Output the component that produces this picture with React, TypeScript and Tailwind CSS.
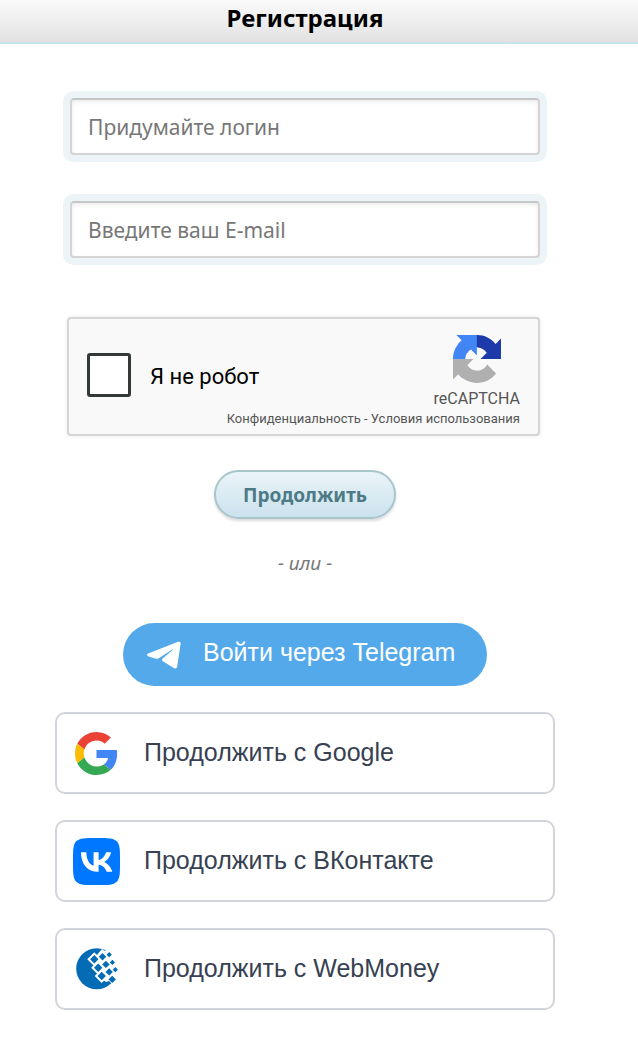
import type { ReactNode } from 'react';

function RecaptchaLogo() {
  return (
    <svg viewBox="0 0 64 64" className="size-12" aria-hidden="true">
      <path fill="#1c3aa9" d="M64 31.955l-.033-1.37V4.687l-7.16 7.16C50.948 4.674 42.033.093 32.05.093c-10.4 0-19.622 4.96-25.458 12.64l11.736 11.86a15.55 15.55 0 0 1 4.754-5.334c2.05-1.6 4.952-2.906 8.968-2.906.485 0 .86.057 1.135.163 4.976.393 9.288 3.14 11.828 7.124l-8.307 8.307L64 31.953" />
      <path fill="#4285f4" d="M31.862.094l-1.37.033H4.594l7.16 7.16C4.58 13.147 0 22.06 0 32.046c0 10.4 4.96 19.622 12.64 25.458L24.5 45.768a15.55 15.55 0 0 1-5.334-4.754c-1.6-2.05-2.906-4.952-2.906-8.968 0-.485.057-.86.163-1.135.393-4.976 3.14-9.288 7.124-11.828l8.307 8.307L31.86.095" />
      <path fill="#b0b0b0" d="M.001 32.045l.033 1.37v25.898l7.16-7.16c5.86 7.173 14.774 11.754 24.76 11.754 10.4 0 19.622-4.96 25.458-12.64l-11.736-11.86a15.55 15.55 0 0 1-4.754 5.334c-2.05 1.6-4.952 2.906-8.968 2.906-.485 0-.86-.057-1.135-.163-4.976-.393-9.288-3.14-11.828-7.124l8.307-8.307c-10.522.04-22.4.066-27.295-.005" />
    </svg>
  );
}

function TelegramIcon() {
  return (
    <svg viewBox="0 0 34 28" className="h-7 w-[34px]" fill="#fff" aria-hidden="true">
      <path d="M1.2 12.4 L31 .8 C32.8 .2 33.9 1.2 33.6 3 L30.2 25.6 C29.9 27.6 28.3 28 26.8 27 L16.2 20.4 C14.8 19.5 14.6 18.7 15.7 17.6 L25.6 9 C26.3 8.3 26 8 25.2 8.4 L12.6 16.8 C11.2 17.7 9.8 17.9 8.2 17.4 L1.6 15.4 C-.3 14.8 -.4 13.1 1.2 12.4 Z" />
    </svg>
  );
}

function GoogleIcon() {
  return (
    <svg viewBox="0 0 48 48" className="size-[43px]" aria-hidden="true">
      <path fill="#EA4335" d="M24 9.5c3.54 0 6.71 1.22 9.21 3.6l6.85-6.85C35.9 2.38 30.47 0 24 0 14.62 0 6.51 5.38 2.56 13.22l7.98 6.19C12.43 13.72 17.74 9.5 24 9.5z" />
      <path fill="#4285F4" d="M46.98 24.55c0-1.57-.15-3.09-.38-4.55H24v9.02h12.94c-.58 2.96-2.26 5.48-4.78 7.18l7.73 6c4.51-4.18 7.09-10.36 7.09-17.65z" />
      <path fill="#FBBC05" d="M10.53 28.59c-.48-1.45-.76-2.99-.76-4.59s.27-3.14.76-4.59l-7.98-6.19C.92 16.46 0 20.12 0 24c0 3.88.92 7.54 2.56 10.78l7.97-6.19z" />
      <path fill="#34A853" d="M24 48c6.48 0 11.93-2.13 15.89-5.81l-7.73-6c-2.15 1.45-4.92 2.3-8.16 2.3-6.26 0-11.57-4.22-13.47-9.91l-7.98 6.19C6.51 42.62 14.62 48 24 48z" />
    </svg>
  );
}

function VkIcon() {
  return (
    <svg viewBox="0 0 48 48" className="size-[47px]" aria-hidden="true">
      <path fill="#07f" d="M0 23.04C0 12.1788 0 6.74826 3.37413 3.37413C6.74826 0 12.1788 0 23.04 0H24.96C35.8212 0 41.2517 0 44.6259 3.37413C48 6.74826 48 12.1788 48 23.04V24.96C48 35.8212 48 41.2517 44.6259 44.6259C41.2517 48 35.8212 48 24.96 48H23.04C12.1788 48 6.74826 48 3.37413 44.6259C0 41.2517 0 35.8212 0 24.96V23.04Z" />
      <path fill="#fff" d="M25.54 34.5801C14.6 34.5801 8.3601 27.0801 8.1001 14.6001H13.5801C13.7601 23.7601 17.8 27.6401 21 28.4401V14.6001H26.1602V22.5001C29.3202 22.1601 32.6398 18.5601 33.7598 14.6001H38.9199C38.0599 19.4801 34.4599 23.0801 31.8999 24.5601C34.4599 25.7601 38.5601 28.9001 40.1201 34.5801H34.4399C33.2199 30.7801 30.1802 27.8401 26.1602 27.4401V34.5801H25.54Z" />
    </svg>
  );
}

const LARGE = 'M18.3 7.1l4.2 4.2-4.2 4.2-4.2-4.2zM22.2 15.5l4.2 4.2-4.2 4.2-4.2-4.2zM25.7 23.8l4.2 4.2-4.2 4.2-4.2-4.2z';

function WebMoneyIcon() {
  return (
    <svg viewBox="0 0 42 42" className="size-[42px]" fill="#036cb5" aria-hidden="true">
      <circle cx="20.7" cy="20.7" r="20.5" />
      <path fill="#fff" d="M20 8l6-7 3 2 4-3h9v34l-5 3-4-4-3 1-6-4z" />
      <path fill="#fff" stroke="#fff" strokeWidth="4" d={LARGE} />
      <path d={LARGE} />
      <path d="M26.500 5l3.700 3.700-3.700 3.700-3.700-3.700zM29.900 12.700l3.700 3.700-3.700 3.700-3.700-3.700zM33.200 20.200l3.700 3.700-3.700 3.700-3.700-3.700zM36.200 27.700l3.700 3.700-3.700 3.700-3.700-3.700z" />
      <path d="M33.200 4.100l2.600 2.600-2.600 2.600-2.600-2.600zM36.400 11.800l2.600 2.600-2.600 2.600-2.600-2.600zM39.300 19.100l2.600 2.600-2.600 2.600-2.600-2.600z" />
    </svg>
  );
}

function Field({ id, type, placeholder }: { id: string; type: string; placeholder: string }) {
  return (
    <div className="rounded-[10px] bg-[#edf4f8] p-[7px]">
      <input
        id={id}
        type={type}
        placeholder={placeholder}
        aria-label={placeholder}
        className="block h-[57px] w-full rounded-sm border-2 border-[#d4d4d4] border-t-[#c6c6c6] bg-white px-4 font-['Noto_Sans',sans-serif] text-[21px] shadow-[inset_0_2px_4px_rgba(0,0,0,0.08)] outline-none placeholder:text-[#777]"
      />
    </div>
  );
}

function SocialButton({ icon, children }: { icon: ReactNode; children: ReactNode }) {
  return (
    <button
      type="button"
      className="flex h-[82px] w-full items-center rounded-[10px] border-2 border-[#d1d5db] bg-white pl-4 text-[25px] text-[#374151]"
    >
      <span className="mr-6 flex w-[47px] justify-center">{icon}</span>
      {children}
    </button>
  );
}

function App() {
  return (
    <div className="min-h-screen bg-white font-['Liberation_Sans',Arial,sans-serif]">
      <header className="h-11 border-b-2 border-[#c9e3ea] bg-linear-to-b from-[#fafafa] to-[#e2e2e2] pr-7 text-center">
        <h1 className="font-['Noto_Sans',sans-serif] text-[24px] leading-9 font-bold text-black">Регистрация</h1>
      </header>

      <main className="pt-[47px] pr-[83px] pb-11 pl-[55px]">
        <form className="flex flex-col px-2" onSubmit={(e) => e.preventDefault()}>
          <div className="flex flex-col gap-8">
            <Field id="login" type="text" placeholder="Придумайте логин" />
            <Field id="email" type="email" placeholder="Введите ваш E-mail" />
          </div>

          <div className="mt-[52px] mr-[7px] ml-1 flex h-[119px] justify-between rounded-sm border-2 border-[#d6d6d6] bg-[#f9f9f9] px-[18px] font-['Roboto',sans-serif] shadow-[0_0_4px_rgba(0,0,0,0.08)]">
            <label className="flex shrink-0 items-center gap-[19px] pb-1 text-[22px] text-black">
              <input
                type="checkbox"
                className="size-11 appearance-none rounded-[3px] border-3 border-[#333938] bg-white"
              />
              <span className="pt-1">Я не робот</span>
            </label>
            <div className="-ml-10 flex flex-col items-end pt-4 text-[#555]">
              <div className="flex flex-col items-center">
                <RecaptchaLogo />
                <span className="mt-1.5 text-[16px] leading-5">reCAPTCHA</span>
              </div>
              <div className="text-[13px] leading-5 whitespace-nowrap">
                <a href="#privacy">Конфиденциальность</a> - <a href="#terms">Условия использования</a>
              </div>
            </div>
          </div>

          <button
            type="submit"
            className="mt-[34px] h-[49px] w-[182px] self-center rounded-full border-2 border-[#a9c5cc] bg-linear-to-b from-[#eaf4f8] to-[#cbe2ed] pt-0.5 font-['Noto_Sans',sans-serif] text-[19px] font-bold text-[#4d7a85] shadow-[0_2px_3px_rgba(0,0,0,0.15)]"
          >
            Продолжить
          </button>
        </form>

        <p className="mt-8 text-center font-['Noto_Sans',sans-serif] text-[19px] leading-6 text-[#777] italic">- или -</p>

        <button
          type="button"
          className="mx-auto mt-12 flex h-[63px] w-[364px] items-center gap-[22px] rounded-full bg-[#54a9eb] pl-6 text-[25px] whitespace-nowrap text-white"
        >
          <TelegramIcon />
          <span className="pb-1">Войти через Telegram</span>
        </button>

        <div className="mt-[26px] flex flex-col gap-[26px]">
          <SocialButton icon={<GoogleIcon />}>Продолжить с Google</SocialButton>
          <SocialButton icon={<VkIcon />}>Продолжить с ВКонтакте</SocialButton>
          <SocialButton icon={<WebMoneyIcon />}>Продолжить с WebMoney</SocialButton>
        </div>
      </main>
    </div>
  );
}

export default App;
